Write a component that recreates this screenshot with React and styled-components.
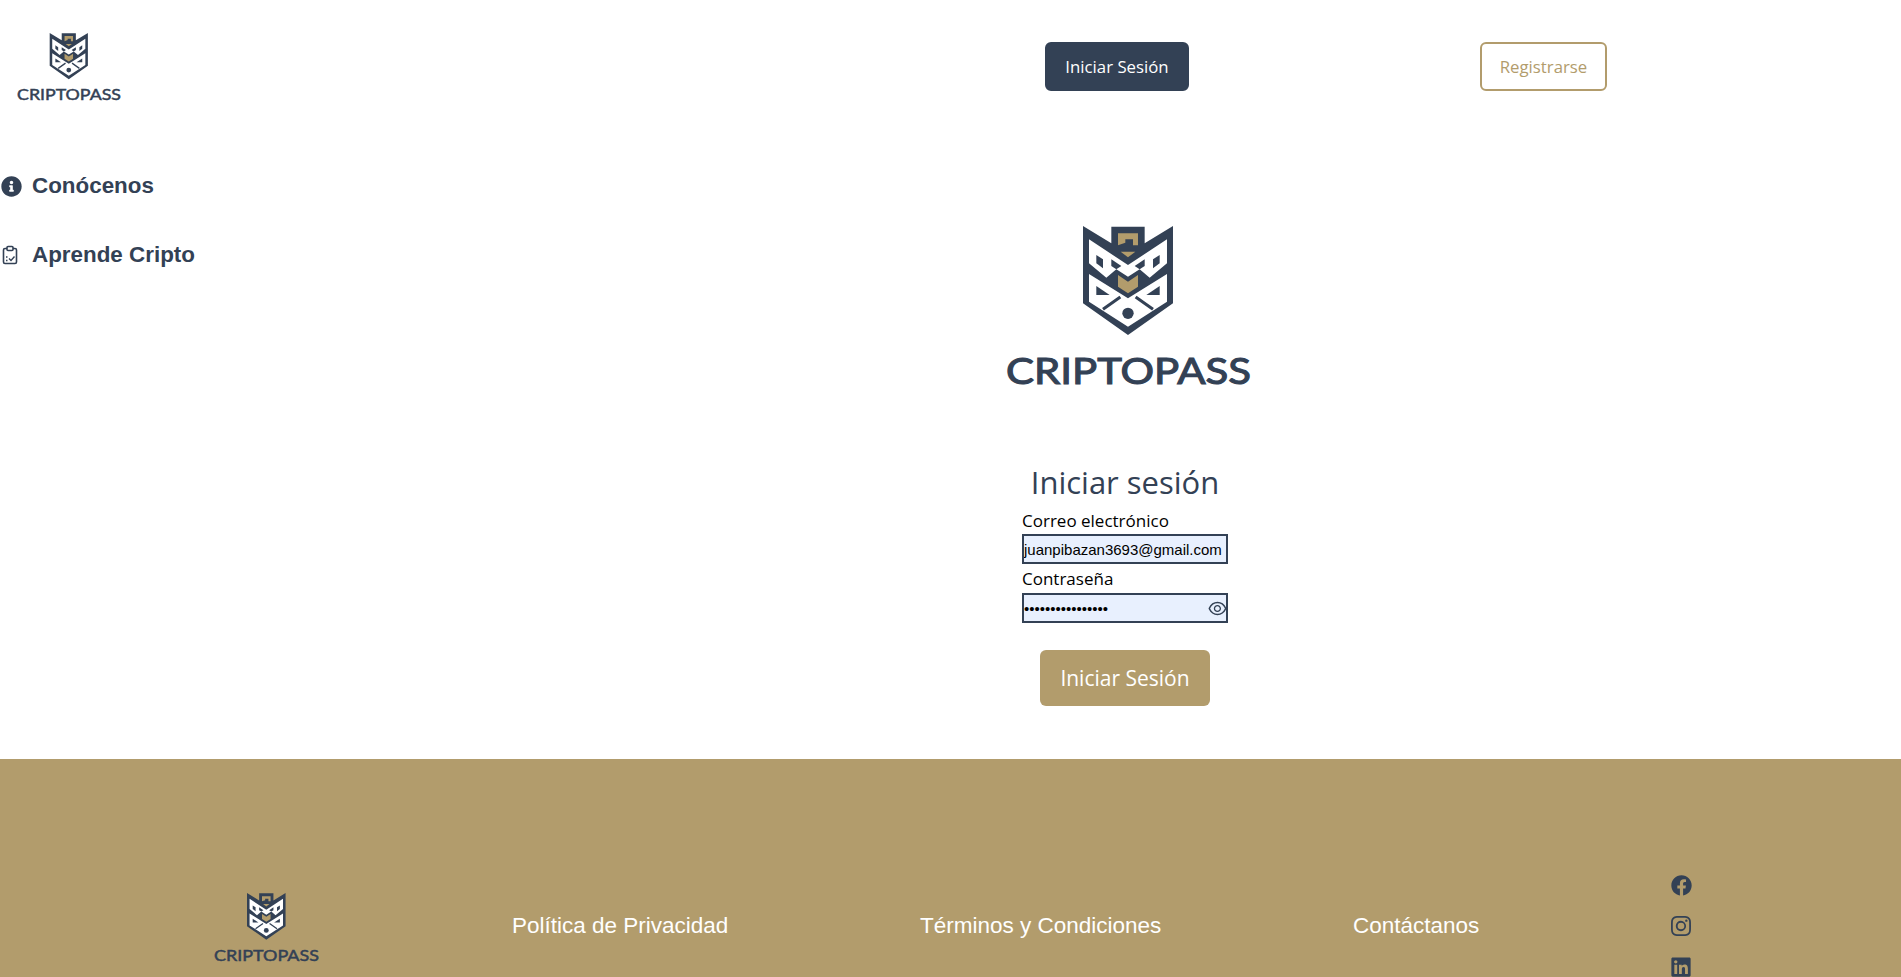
import React from "react";
import styled, { createGlobalStyle } from "styled-components";
import { FaInfoCircle, FaFacebook, FaLinkedin } from "react-icons/fa";
import { BsInstagram } from "react-icons/bs";
import { AiOutlineEye } from "react-icons/ai";

const navy = "#334155";
const gold = "#b29c6c";
const humanist = `"Open Sans", "Noto Sans", sans-serif`;

const GlobalStyle = createGlobalStyle`
  html, body {
    margin: 0;
    padding: 0;
    height: 100%;
    overflow: hidden;
    background: #ffffff;
    font-family: "Liberation Sans", Arial, sans-serif;
  }
  * { box-sizing: border-box; }
`;

const Page = styled.div`
  height: 977px;
  overflow: hidden;
  display: flex;
  flex-direction: column;
`;

const Header = styled.header`
  height: 133px;
  padding: 33px 0 0 17px;
  display: flex;
  align-items: flex-start;
`;

const HeaderActions = styled.div`
  margin: 9px 0 0 924px;
  display: flex;
  gap: 291px;
`;

const TopButton = styled.button`
  height: 49px;
  width: ${(p) => p.$width}px;
  border-radius: 6px;
  border: 2px solid ${(p) => (p.$outline ? gold : navy)};
  background: ${(p) => (p.$outline ? "#fff" : navy)};
  color: ${(p) => (p.$outline ? gold : "#fff")};
  font-family: ${humanist};
  font-size: 16.8px;
  cursor: pointer;
`;

const Body = styled.div`
  flex: 1;
  display: grid;
  grid-template-columns: 349px 1fr;
`;

const Sidebar = styled.nav`
  padding-top: 40px;
  display: flex;
  flex-direction: column;
  gap: 43px;
`;

const NavItem = styled.a`
  display: flex;
  align-items: center;
  height: 26px;
  color: ${navy};
  font-size: 22.4px;
  font-weight: 700;
  text-decoration: none;
`;

const NavIcon = styled.span`
  width: 32px;
  padding-left: 1px;
  display: flex;
  align-items: center;
`;

const Main = styled.main`
  padding-top: 93px;
  display: flex;
  flex-direction: column;
  align-items: center;
`;

const MainLogo = styled.div`
  margin-left: 6px;
`;

const Form = styled.form`
  margin-top: 63px;
  width: 206px;
  display: flex;
  flex-direction: column;
`;

const Heading = styled.h1`
  margin: 0 -20px 6px;
  text-align: center;
  font-size: 31px;
  font-weight: 400;
  line-height: 42px;
  color: ${navy};
  font-family: ${humanist};
`;

const Label = styled.label`
  display: block;
  font-family: ${humanist};
  font-size: 17px;
  line-height: 24px;
  margin-top: ${(p) => p.$top || 0}px;
  margin-bottom: ${(p) => p.$bottom || 0}px;
  color: #000;
`;

const InputWrap = styled.div`
  position: relative;
  height: 30px;
  margin-top: 1px;
`;

const Input = styled.input`
  width: 100%;
  height: 30px;
  border: 2px solid ${navy};
  background: #e8f0fe;
  padding: 0;
  outline: none;
  font-family: "Liberation Sans", Arial, sans-serif;
  font-size: 15px;
  color: #000;
`;

const EyeButton = styled.span`
  position: absolute;
  right: 0;
  top: 5px;
  display: flex;
  color: ${navy};
`;

const Submit = styled.button`
  align-self: center;
  margin-top: 27px;
  width: 170px;
  height: 56px;
  background: ${gold};
  border: none;
  border-radius: 6px;
  color: #fff;
  font-family: ${humanist};
  font-size: 21px;
  cursor: pointer;
`;

const Footer = styled.footer`
  height: 218px;
  flex-shrink: 0;
  background: ${gold};
  padding: 115px 0 0 214px;
  display: flex;
  align-items: flex-start;
`;

const FooterLogo = styled.div`
  margin-top: 19px;
  width: 298px;
`;

const FooterLink = styled.a`
  width: ${(p) => p.$width}px;
  margin-top: 38px;
  color: #fff;
  font-size: 22.5px;
  line-height: 27px;
  text-decoration: none;
`;

const Socials = styled.div`
  display: flex;
  flex-direction: column;
  align-items: center;
  gap: 20px;
  color: ${navy};
  margin-left: 191px;
  margin-top: 1px;
`;

function ClipboardIcon() {
  return (
    <svg width="18" height="20" viewBox="0 0 18 20" fill="none" stroke={navy} strokeWidth="1.6">
      <rect x="2.5" y="3.5" width="13" height="15" rx="1.5" />
      <rect x="6" y="1.5" width="6" height="4" rx="1" fill="#fff" />
      <path d="M8 13.5l2 2 3.5-4" strokeWidth="1.4" />
      <path d="M5 12h1.5M5 15.5h1.5" strokeWidth="1.4" />
    </svg>
  );
}

function Logo({ width }) {
  return (
    <svg width={width} viewBox="0 0 245 172" style={{ display: "block" }}>
      <g transform="translate(77 0) scale(0.3333)">
        <polygon
          fill={navy}
          points="0,0 85,52 85,2 185,2 185,52 270,0 270,232 135,327 0,232"
        />
        <polygon
          fill={gold}
          points="105,22 165,22 165,58 150,58 150,40 127,40 127,50 105,58"
        />
        <polygon fill={gold} points="113,77 157,77 135,94" />
        <polygon fill={gold} points="105,147 135,167 165,147 165,182 135,202 105,182" />
        <polygon
          fill="#fff"
          points="18,40 135,117 252,40 252,112 200,155 170,130 135,152 100,130 70,155 18,112"
        />
        <polygon fill={navy} points="85,100 115,120 100,130 85,120" />
        <polygon fill={navy} points="185,100 155,120 170,130 185,120" />
        <polygon fill={navy} points="40,87 60,100 60,127 40,112" />
        <polygon fill={navy} points="230,87 210,100 210,127 230,112" />
        <polygon fill="#fff" points="18,144 135,217 252,144 252,227 135,302 18,227" />
        <polygon fill={navy} points="40,180 80,207 40,207" />
        <polygon fill={navy} points="230,180 190,207 230,207" />
        <path d="M60 250l52-37M210 250l-52-37" stroke={navy} strokeWidth="9" fill="none" />
        <circle cx="135" cy="262" r="17" fill={navy} />
      </g>
      <text
        x="0"
        y="158"
        fill={navy}
        stroke={navy}
        strokeWidth="1.1"
        fontFamily="Lato, sans-serif"
        fontWeight="400"
        fontSize="36"
        textLength="245"
        lengthAdjust="spacingAndGlyphs"
      >
        CRIPTOPASS
      </text>
    </svg>
  );
}

export default function App() {
  return (
    <Page>
      <GlobalStyle />
      <Header>
        <Logo width={104} />
        <HeaderActions>
          <TopButton $width={144}>Iniciar Sesión</TopButton>
          <TopButton $width={127} $outline>
            Registrarse
          </TopButton>
        </HeaderActions>
      </Header>
      <Body>
        <Sidebar>
          <NavItem href="#">
            <NavIcon>
              <FaInfoCircle size={21} />
            </NavIcon>
            Conócenos
          </NavItem>
          <NavItem href="#">
            <NavIcon>
              <ClipboardIcon />
            </NavIcon>
            Aprende Cripto
          </NavItem>
        </Sidebar>
        <Main>
          <MainLogo>
            <Logo width={245} />
          </MainLogo>
          <Form>
            <Heading>Iniciar sesión</Heading>
            <Label>Correo electrónico</Label>
            <InputWrap>
              <Input type="email" readOnly value="juanpibazan3693@gmail.com" />
            </InputWrap>
            <Label $top={3} $bottom={1}>Contraseña</Label>
            <InputWrap>
              <Input type="password" readOnly value="juanpibazan3693x" />
              <EyeButton>
                <AiOutlineEye size={21} />
              </EyeButton>
            </InputWrap>
            <Submit type="button">Iniciar Sesión</Submit>
          </Form>
        </Main>
      </Body>
      <Footer>
        <FooterLogo>
          <Logo width={105} />
        </FooterLogo>
        <FooterLink $width={408}>Política de Privacidad</FooterLink>
        <FooterLink $width={433}>Términos y Condiciones</FooterLink>
        <FooterLink $width={126}>Contáctanos</FooterLink>
        <Socials>
          <FaFacebook size={21} />
          <BsInstagram size={20} />
          <FaLinkedin size={22} />
        </Socials>
      </Footer>
    </Page>
  );
}
